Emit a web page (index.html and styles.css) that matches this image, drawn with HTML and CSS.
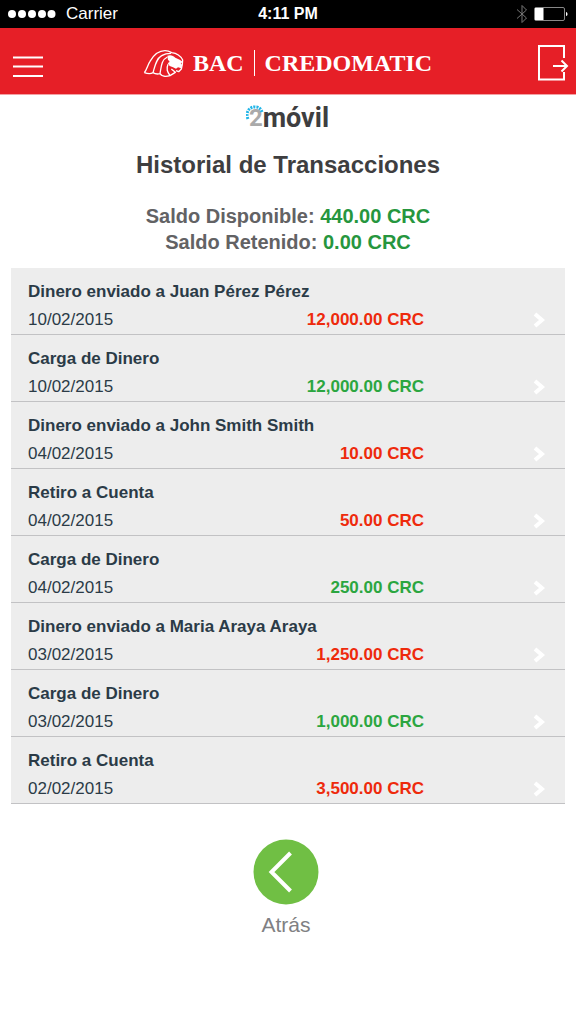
FILE: index.html
```html
<!DOCTYPE html>
<html lang="es">
<head>
<meta charset="utf-8">
<meta name="viewport" content="width=device-width, initial-scale=1">
<title>Historial de Transacciones</title>
<link rel="stylesheet" href="styles.css">
</head>
<body>
<div class="status">
  <div class="carrier">
    <svg class="signal" viewBox="0 0 48 8" aria-hidden="true"><circle cx="4" cy="4" r="4"/><circle cx="14" cy="4" r="4"/><circle cx="24" cy="4" r="4"/><circle cx="34" cy="4" r="4"/><circle cx="43.500" cy="4" r="4"/></svg>
    <span>Carrier</span>
  </div>
  <strong class="clock">4:11 PM</strong>
  <div class="indicators">
    <svg class="bluetooth" viewBox="0 0 12 20" aria-hidden="true"><path d="M1 5.500 10.500 14 6 18.500V1.500L10.500 6 1 14.500"/></svg>
    <svg class="battery" viewBox="0 0 34 14" aria-hidden="true"><rect class="shell" x=".5" y=".5" width="30" height="13" rx="1.500"/><path class="charge" d="M1 1h8.500v12H1zM32 5c2 .5 2 4 0 4z"/></svg>
  </div>
</div>
<header class="header">
  <button class="icon-button" type="button" aria-label="Menú">
    <svg class="menu" viewBox="0 0 30 30" aria-hidden="true"><path d="M0 9.500h30M0 18.500h30M0 28h30"/></svg>
  </button>
  <div class="brand">
    <svg class="lion" viewBox="424 144 126 87" aria-hidden="true">
      <path class="mane" d="M431 215C439 205 441 192 448 181C459 162 473 149 493 149C503 149 508 152 513 155C529 157 540 165 546 177L545 190L542 204L534 212L526 209M431 215C442 219 451 219 457 215C463 195 466 174 483 164C491 159 501 157 511 157M457 215C463 219 470 220 478 218C482 195 482 177 500 168M478 218C482 226 495 228 508 224C500 212 496 204 502 190M508 224L524 214L512 204"/>
      <path class="face" d="M500 164C510 160 518 164 524 170L537 176L546 182L540 188L545 191L542 202L532 199L526 203L517 199L507 195L501 186C508 185 508 180 502 177Z"/>
    </svg>
    <span>BAC</span><i class="divider"></i><span>CREDOMATIC</span>
  </div>
  <button class="icon-button" type="button" aria-label="Salir">
    <svg class="exit" viewBox="0 0 32 38" aria-hidden="true"><path d="M27 14V2H2v33.500h25V28M16 22h14M24.500 16.500 30 22l-5.500 5.500"/></svg>
  </button>
</header>
<main class="content">
  <div class="product">
    <svg class="spark" viewBox="0 0 18 18" aria-hidden="true"><path d="M2 14C-1 7 4 1 10 2C13 2 15 4 16 7"/></svg><span class="two">2</span><span class="name">móvil</span>
  </div>
  <h1 class="title">Historial de Transacciones</h1>
  <div class="balances">
    <p>Saldo Disponible: <span class="balance">440.00 CRC</span></p>
    <p>Saldo Retenido: <span class="balance">0.00 CRC</span></p>
  </div>
  <ul class="list">
    <li><a class="row" href="#"><span class="name-line">Dinero enviado a Juan Pérez Pérez</span><span class="date">10/02/2015</span><span class="amount out">12,000.00 CRC</span><svg class="chevron" viewBox="0 0 12 16" aria-hidden="true"><path d="M2 2l7 6-7 6"/></svg></a></li>
    <li><a class="row" href="#"><span class="name-line">Carga de Dinero</span><span class="date">10/02/2015</span><span class="amount in">12,000.00 CRC</span><svg class="chevron" viewBox="0 0 12 16" aria-hidden="true"><path d="M2 2l7 6-7 6"/></svg></a></li>
    <li><a class="row" href="#"><span class="name-line">Dinero enviado a John Smith Smith</span><span class="date">04/02/2015</span><span class="amount out">10.00 CRC</span><svg class="chevron" viewBox="0 0 12 16" aria-hidden="true"><path d="M2 2l7 6-7 6"/></svg></a></li>
    <li><a class="row" href="#"><span class="name-line">Retiro a Cuenta</span><span class="date">04/02/2015</span><span class="amount out">50.00 CRC</span><svg class="chevron" viewBox="0 0 12 16" aria-hidden="true"><path d="M2 2l7 6-7 6"/></svg></a></li>
    <li><a class="row" href="#"><span class="name-line">Carga de Dinero</span><span class="date">04/02/2015</span><span class="amount in">250.00 CRC</span><svg class="chevron" viewBox="0 0 12 16" aria-hidden="true"><path d="M2 2l7 6-7 6"/></svg></a></li>
    <li><a class="row" href="#"><span class="name-line">Dinero enviado a Maria Araya Araya</span><span class="date">03/02/2015</span><span class="amount out">1,250.00 CRC</span><svg class="chevron" viewBox="0 0 12 16" aria-hidden="true"><path d="M2 2l7 6-7 6"/></svg></a></li>
    <li><a class="row" href="#"><span class="name-line">Carga de Dinero</span><span class="date">03/02/2015</span><span class="amount in">1,000.00 CRC</span><svg class="chevron" viewBox="0 0 12 16" aria-hidden="true"><path d="M2 2l7 6-7 6"/></svg></a></li>
    <li><a class="row" href="#"><span class="name-line">Retiro a Cuenta</span><span class="date">02/02/2015</span><span class="amount out">3,500.00 CRC</span><svg class="chevron" viewBox="0 0 12 16" aria-hidden="true"><path d="M2 2l7 6-7 6"/></svg></a></li>
  </ul>
  <button class="back" type="button">
    <svg class="back-icon" viewBox="0 0 66 66" aria-hidden="true"><circle cx="33" cy="33" r="32.500"/><path d="M37.500 14 18.500 33l19 19"/></svg>
    <span>Atrás</span>
  </button>
</main>
</body>
</html>
```
FILE: styles.css
```css
* { box-sizing: border-box; }
body {
  margin: 0;
  background: #fff;
  color: #2b3b47;
  font-family: "Liberation Sans", Arial, sans-serif;
}
svg { display: block; flex: none; fill: none; }
button { padding: 0; border: 0; background: none; font: inherit; cursor: pointer; }
p, h1, ul { margin: 0; padding: 0; }

.status {
  display: grid;
  grid-template-columns: 1fr auto 1fr;
  align-items: center;
  height: 28px;
  padding: 0 8px;
  background: #000;
  color: #fff;
  font-size: 17px;
}
.carrier { display: flex; align-items: center; gap: 10px; }
.signal { width: 48px; height: 8px; fill: #fff; }
.clock { font-size: 16px; }
.indicators { display: flex; align-items: center; justify-content: flex-end; gap: 6px; }
.bluetooth { width: 12px; height: 20px; stroke: #777; stroke-width: 1; }
.battery { width: 34px; height: 14px; }
.shell { stroke: #888; }
.charge { fill: #fff; }

.header {
  display: flex;
  align-items: center;
  justify-content: space-between;
  height: 67px;
  padding: 4px 7px 0 13px;
  border-bottom: 1px solid #f3a0a3;
  background: #e61f27;
  color: #fff;
}
.icon-button { color: #fff; }
.menu { width: 30px; height: 30px; stroke: #fff; stroke-width: 2; }
.exit { width: 32px; height: 38px; stroke: #fff; stroke-width: 2; }
.brand {
  display: flex;
  align-items: center;
  margin-right: 6px;
  font: bold 24px/28px "Liberation Serif", "Times New Roman", serif;
}
.lion { width: 42px; height: 29px; margin-right: 9px; }
.mane { stroke: #fff; stroke-width: 4; stroke-linejoin: round; }
.face { fill: #fff; }
.divider { width: 1px; height: 26px; margin: 0 10px; background: #fff; }

.content { display: flex; flex-direction: column; align-items: center; padding: 0 11px 32px; }
.product {
  position: relative;
  display: flex;
  height: 44px;
  padding-left: 2px;
  color: #3e3e40;
  font: bold 27px/46px Roboto, sans-serif;
}
.two { color: #aaa; font-size: 24px; }
.spark { position: absolute; top: 10px; left: -1px; width: 18px; height: 18px; }
.spark path { stroke: #22b5e8; stroke-width: 3; stroke-dasharray: 2 1; }
.title { margin-top: 10px; color: #3e3e40; font-size: 24px; line-height: 32px; }
.balances {
  margin: 22px 0 13px;
  color: #626264;
  font-size: 20px;
  font-weight: bold;
  line-height: 26px;
  text-align: center;
}
.balance { color: #26963e; }

.list { align-self: stretch; list-style: none; }
.row {
  display: grid;
  grid-template-columns: 1fr 1fr 109px 12px;
  grid-template-rows: 28px 28px;
  align-items: center;
  padding: 10px 20px 0 17px;
  border-bottom: 1px solid #c2c2c4;
  background: #ededed;
  color: inherit;
  font-size: 17px;
  line-height: 28px;
  text-decoration: none;
}
.name-line { grid-column: 1 / -1; font-weight: bold; }
.amount { font-weight: bold; text-align: right; }
.out { color: #ee2a0c; }
.in { color: #2ba640; }
.chevron { grid-column: 4; width: 12px; height: 16px; stroke: #fff; stroke-width: 4; }

.back {
  display: flex;
  flex-direction: column;
  align-items: center;
  gap: 6px;
  margin: 35px 4px 0 0;
  color: #808083;
  font-size: 21px;
  line-height: 28px;
}
.back-icon { width: 66px; height: 66px; }
.back-icon circle { fill: #70bf44; }
.back-icon path { stroke: #fff; stroke-width: 4; }
```
